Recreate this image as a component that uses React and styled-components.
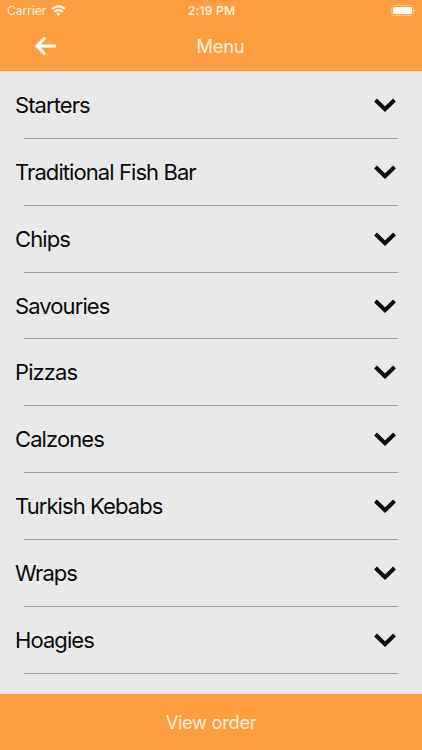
import React, { useState } from 'react';
import styled, { createGlobalStyle } from 'styled-components';

const GlobalStyle = createGlobalStyle`
  body {
    margin: 0;
    font-family: Inter, "Liberation Sans", sans-serif;
  }
`;

const Screen = styled.div`
  display: flex;
  flex-direction: column;
  height: 100vh;
  background-color: #e9e9e9;
  overflow: hidden;
`;

const Header = styled.header`
  flex: none;
  height: 71px;
  background-color: #ff9e40;
  color: #fff3dc;
`;

const StatusBar = styled.div`
  display: grid;
  grid-template-columns: 1fr auto 1fr;
  align-items: center;
  height: 21px;
  padding: 0 6px 0 7px;
  box-sizing: border-box;
`;

const Carrier = styled.div`
  display: flex;
  align-items: center;
  gap: 5px;
  font-size: 12.1px;
  letter-spacing: -0.05px;
`;

const Time = styled.div`
  font-size: 12.1px;
  font-weight: 600;
  letter-spacing: 0.2px;
`;

const Battery = styled.div`
  display: flex;
  justify-content: flex-end;
`;

const NavBar = styled.div`
  display: grid;
  grid-template-columns: 66px 1fr 66px;
  align-items: center;
  height: 50px;
`;

const BackButton = styled.button`
  display: flex;
  padding: 0 0 0 34px;
  border: none;
  background: none;
  cursor: pointer;
`;

const Title = styled.h1`
  margin: 0;
  padding: 0 0 1px 19px;
  font-size: 18.3px;
  font-weight: 400;
  letter-spacing: -0.25px;
  text-align: center;
`;

const List = styled.ul`
  flex: 1;
  min-height: 0;
  margin: 0;
  padding: 1px 0 0;
  border-top: 0;
  list-style: none;
  overflow: hidden;
`;

const Item = styled.li`
  display: flex;
  flex-direction: column;
  height: 66.87px;
`;

const Row = styled.button`
  display: flex;
  flex: 1;
  align-items: center;
  justify-content: space-between;
  padding: 0 25px 0 15px;
  border: none;
  background: none;
  color: #0b0b0b;
  font-family: inherit;
  font-size: 22px;
  letter-spacing: -0.92px;
  cursor: pointer;
`;

const Divider = styled.div`
  height: 1px;
  margin: 0 24px;
  background-color: #a0a0a0;
`;

const OrderButton = styled.button`
  flex: none;
  height: 56px;
  border: none;
  background-color: #ff9e40;
  color: #fff3dc;
  font-family: inherit;
  font-size: 18.3px;
  letter-spacing: -0.3px;
  cursor: pointer;
`;

const categories = [
    'Starters',
    'Traditional Fish Bar',
    'Chips',
    'Savouries',
    'Pizzas',
    'Calzones',
    'Turkish Kebabs',
    'Wraps',
    'Hoagies',
];

const WifiIcon = () => (
    <svg width="15" height="11" viewBox="0 0 15 11" fill="none" stroke="#fffaf0" strokeWidth="2.2">
        <path d="M0.9 4.1a9.4 9.4 0 0 1 13.2 0" />
        <path d="M3.3 6.8a6 6 0 0 1 8.4 0" />
        <path d="M7.5 11 5.2 8.7a3.3 3.3 0 0 1 4.6 0z" fill="#fffaf0" stroke="none" />
    </svg>
);

const BatteryIcon = () => (
    <svg width="25" height="11" viewBox="0 0 25 11">
        <rect x="0.5" y="0.5" width="22" height="10" rx="2.8" fill="none" stroke="#ffc48c" />
        <rect x="2" y="2" width="19" height="7" rx="1.3" fill="#fff" />
        <path d="M23.6 3.8v3.4c1.4-.6 1.4-2.8 0-3.4z" fill="#ffc48c" />
    </svg>
);

const BackIcon = () => (
    <svg width="22" height="20" viewBox="0 0 22 20" fill="none" stroke="#fff" strokeWidth="3">
        <path d="M22 10H3.5M11.2 1.6 2.8 10l8.4 8.4" />
    </svg>
);

const ChevronIcon = () => (
    <svg width="24" height="16" viewBox="0 0 24 16" fill="none" stroke="#0b0b0b" strokeWidth="4">
        <path d="M2.5 3 12 12.3 21.5 3" />
    </svg>
);

const App = () => {
    const [selected, setSelected] = useState(null);

    return (
        <Screen>
            <GlobalStyle />
            <Header>
                <StatusBar>
                    <Carrier>
                        Carrier
                        <WifiIcon />
                    </Carrier>
                    <Time>2:19 PM</Time>
                    <Battery>
                        <BatteryIcon />
                    </Battery>
                </StatusBar>
                <NavBar>
                    <BackButton aria-label="Back">
                        <BackIcon />
                    </BackButton>
                    <Title>Menu</Title>
                </NavBar>
            </Header>
            <List>
                {categories.map((name) => (
                    <Item key={name}>
                        <Row aria-pressed={selected === name} onClick={() => setSelected(name)}>
                            {name}
                            <ChevronIcon />
                        </Row>
                        <Divider />
                    </Item>
                ))}
            </List>
            <OrderButton>View order</OrderButton>
        </Screen>
    );
};

export default App;
